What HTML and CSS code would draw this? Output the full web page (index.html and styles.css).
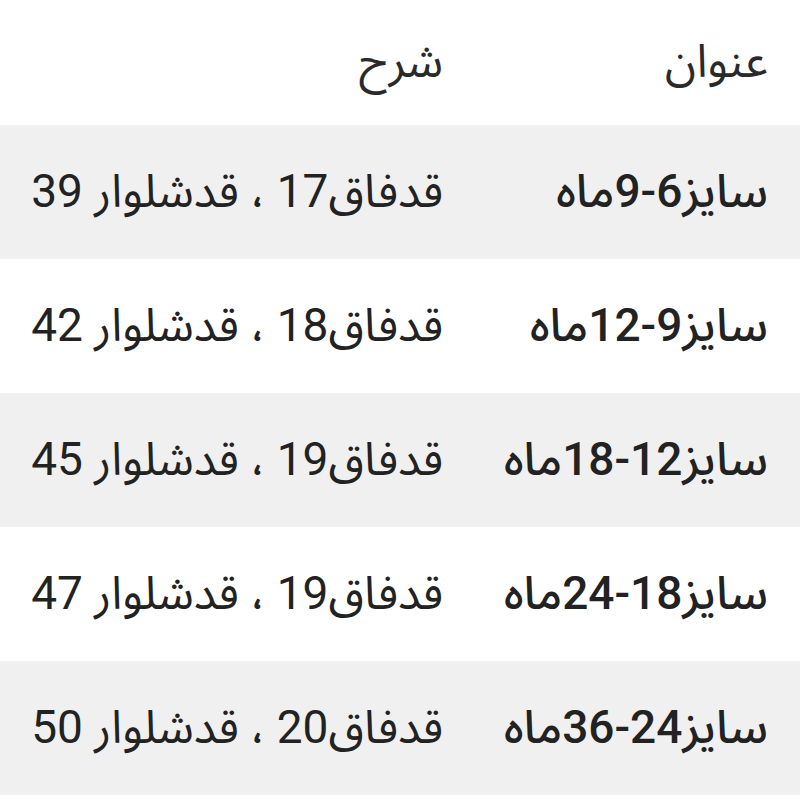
FILE: index.html
```html
<!DOCTYPE html>
<html lang="fa" dir="rtl">
<head>
<meta charset="utf-8">
<link rel="stylesheet" href="styles.css">
</head>
<body>
<table class="size-table">
  <thead>
    <tr class="head-row">
      <th class="col-title">عنوان</th>
      <th class="col-desc">شرح</th>
    </tr>
  </thead>
  <tbody>
    <tr class="row shaded">
      <td class="col-title">سایز6-9ماه</td>
      <td class="col-desc">قدفاق17 ، قدشلوار 39</td>
    </tr>
    <tr class="row">
      <td class="col-title">سایز9-12ماه</td>
      <td class="col-desc">قدفاق18 ، قدشلوار 42</td>
    </tr>
    <tr class="row shaded">
      <td class="col-title">سایز12-18ماه</td>
      <td class="col-desc">قدفاق19 ، قدشلوار 45</td>
    </tr>
    <tr class="row">
      <td class="col-title">سایز18-24ماه</td>
      <td class="col-desc">قدفاق19 ، قدشلوار 47</td>
    </tr>
    <tr class="row shaded">
      <td class="col-title">سایز24-36ماه</td>
      <td class="col-desc">قدفاق20 ، قدشلوار 50</td>
    </tr>
  </tbody>
</table>
</body>
</html>
```
FILE: styles.css
```css
html, body {
  margin: 0;
  padding: 0;
  background: #ffffff;
}
body {
  font-family: Roboto, "Noto Sans Arabic", "DejaVu Sans", sans-serif;
  color: #222222;
  direction: rtl;
}
.size-table {
  width: 100%;
  border-collapse: collapse;
  border-spacing: 0;
  table-layout: fixed;
}
.size-table th,
.size-table td {
  text-align: right;
  vertical-align: middle;
  padding: 0 32px;
  font-size: 46px;
  white-space: nowrap;
}
.size-table th {
  font-weight: 400;
  color: #2a2a2a;
}
.head-row {
  height: 125px;
}
.row {
  height: 134px;
}
.row.shaded {
  background: #f0f0f0;
}
.col-title {
  width: 261px;
  font-weight: 500;
}
.col-desc {
  font-weight: 400;
}
```
